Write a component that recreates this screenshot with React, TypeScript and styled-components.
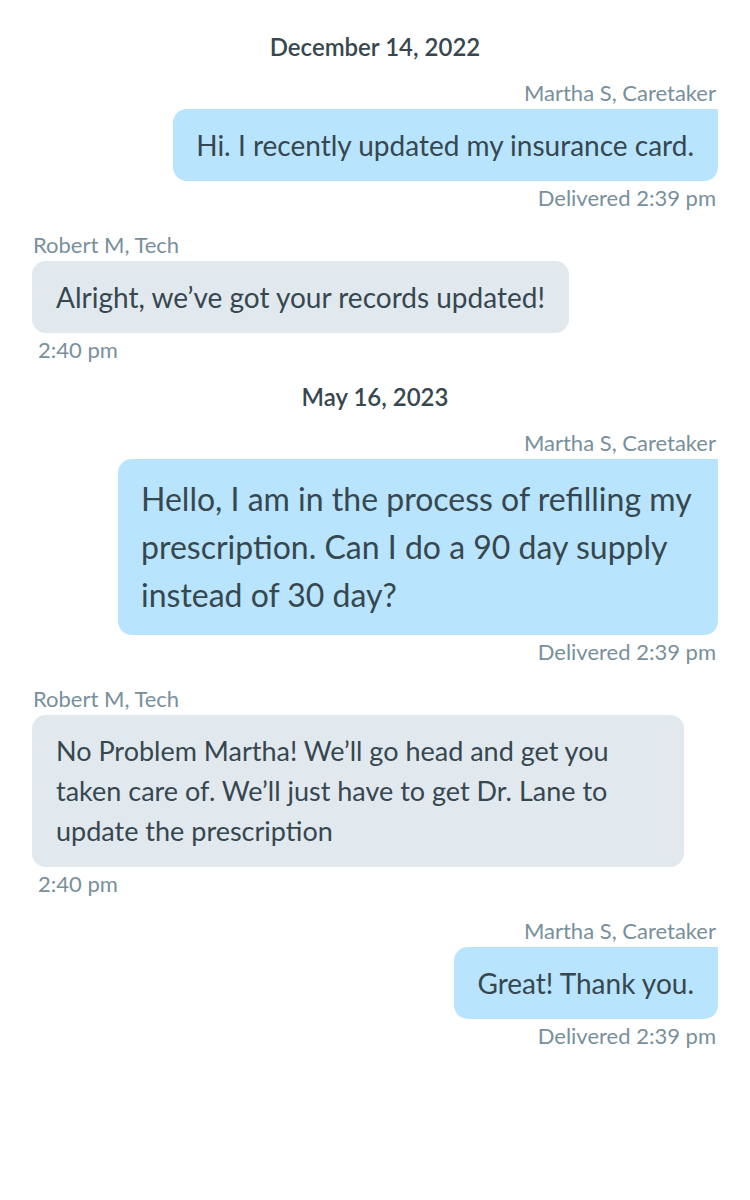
import React from "react";
import styled, { createGlobalStyle } from "styled-components";

const Global = createGlobalStyle`
  html, body { margin: 0; padding: 0; background: #ffffff; }
  body { font-family: Lato, "Open Sans", sans-serif; -webkit-font-smoothing: antialiased; }
`;

const Thread = styled.div`
  display: flex;
  flex-direction: column;
  gap: 22px;
  padding: 35px 32px 40px 32px;
  width: 750px;
  box-sizing: border-box;
`;

const DateLabel = styled.div`
  text-align: center;
  font-size: 24px;
  line-height: 24px;
  font-weight: 600;
  color: #37474f;
`;

const Group = styled.div<{ $mine: boolean }>`
  display: flex;
  flex-direction: column;
  align-items: ${(p) => (p.$mine ? "flex-end" : "flex-start")};
  padding-bottom: 1px;
`;

const Sender = styled.div<{ $mine: boolean }>`
  font-size: 22px;
  line-height: 24px;
  color: #78909c;
  margin-bottom: 4px;
  padding: ${(p) => (p.$mine ? "0 2px 0 0" : "0 0 0 1px")};
`;

const Bubble = styled.div<{ $mine: boolean; $size: number; $lh: number; $max: number }>`
  box-sizing: border-box;
  max-width: ${(p) => p.$max}px;
  padding: 16px 24px 16px ${(p) => (p.$mine ? 23 : 24)}px;
  background: ${(p) => (p.$mine ? "#b9e4fd" : "#e1e9ef")};
  border-radius: ${(p) => (p.$mine ? "14px 0 14px 14px" : "14px")};
  color: #37474f;
  font-size: ${(p) => p.$size}px;
  line-height: ${(p) => p.$lh}px;
`;

const Meta = styled.div<{ $mine: boolean }>`
  font-size: 22px;
  line-height: 24px;
  color: #78909c;
  margin-top: 5px;
  padding: ${(p) => (p.$mine ? "0 2px 0 0" : "0 0 0 6px")};
`;

type Item =
  | { kind: "date"; text: string }
  | {
      kind: "msg";
      mine: boolean;
      sender: string;
      text: string;
      meta: string;
      size?: number;
      lh?: number;
      max?: number;
    };

const items: Item[] = [
  { kind: "date", text: "December 14, 2022" },
  {
    kind: "msg",
    mine: true,
    sender: "Martha S, Caretaker",
    text: "Hi. I recently updated my insurance card.",
    meta: "Delivered 2:39 pm",
  },
  {
    kind: "msg",
    mine: false,
    sender: "Robert M, Tech",
    text: "Alright, we\u2019ve got your records updated!",
    meta: "2:40 pm",
  },
  { kind: "date", text: "May 16, 2023" },
  {
    kind: "msg",
    mine: true,
    sender: "Martha S, Caretaker",
    text: "Hello, I am in the process of refilling my prescription. Can I do a 90 day supply instead of 30 day?",
    meta: "Delivered 2:39 pm",
    size: 32,
    lh: 48,
    max: 600,
  },
  {
    kind: "msg",
    mine: false,
    sender: "Robert M, Tech",
    text: "No Problem Martha! We\u2019ll go head and get you taken care of. We\u2019ll just have to get Dr. Lane to update the prescription",
    meta: "2:40 pm",
    size: 27,
    max: 652,
  },
  {
    kind: "msg",
    mine: true,
    sender: "Martha S, Caretaker",
    text: "Great! Thank you.",
    meta: "Delivered 2:39 pm",
  },
];

export default function App() {
  return (
    <>
      <Global />
      <Thread>
        {items.map((it, i) =>
          it.kind === "date" ? (
            <DateLabel key={i}>{it.text}</DateLabel>
          ) : (
            <Group key={i} $mine={it.mine}>
              <Sender $mine={it.mine}>{it.sender}</Sender>
              <Bubble
                $mine={it.mine}
                $size={it.size ?? 28}
                $lh={it.lh ?? 40}
                $max={it.max ?? 652}
              >
                {it.text}
              </Bubble>
              <Meta $mine={it.mine}>{it.meta}</Meta>
            </Group>
          )
        )}
      </Thread>
    </>
  );
}
